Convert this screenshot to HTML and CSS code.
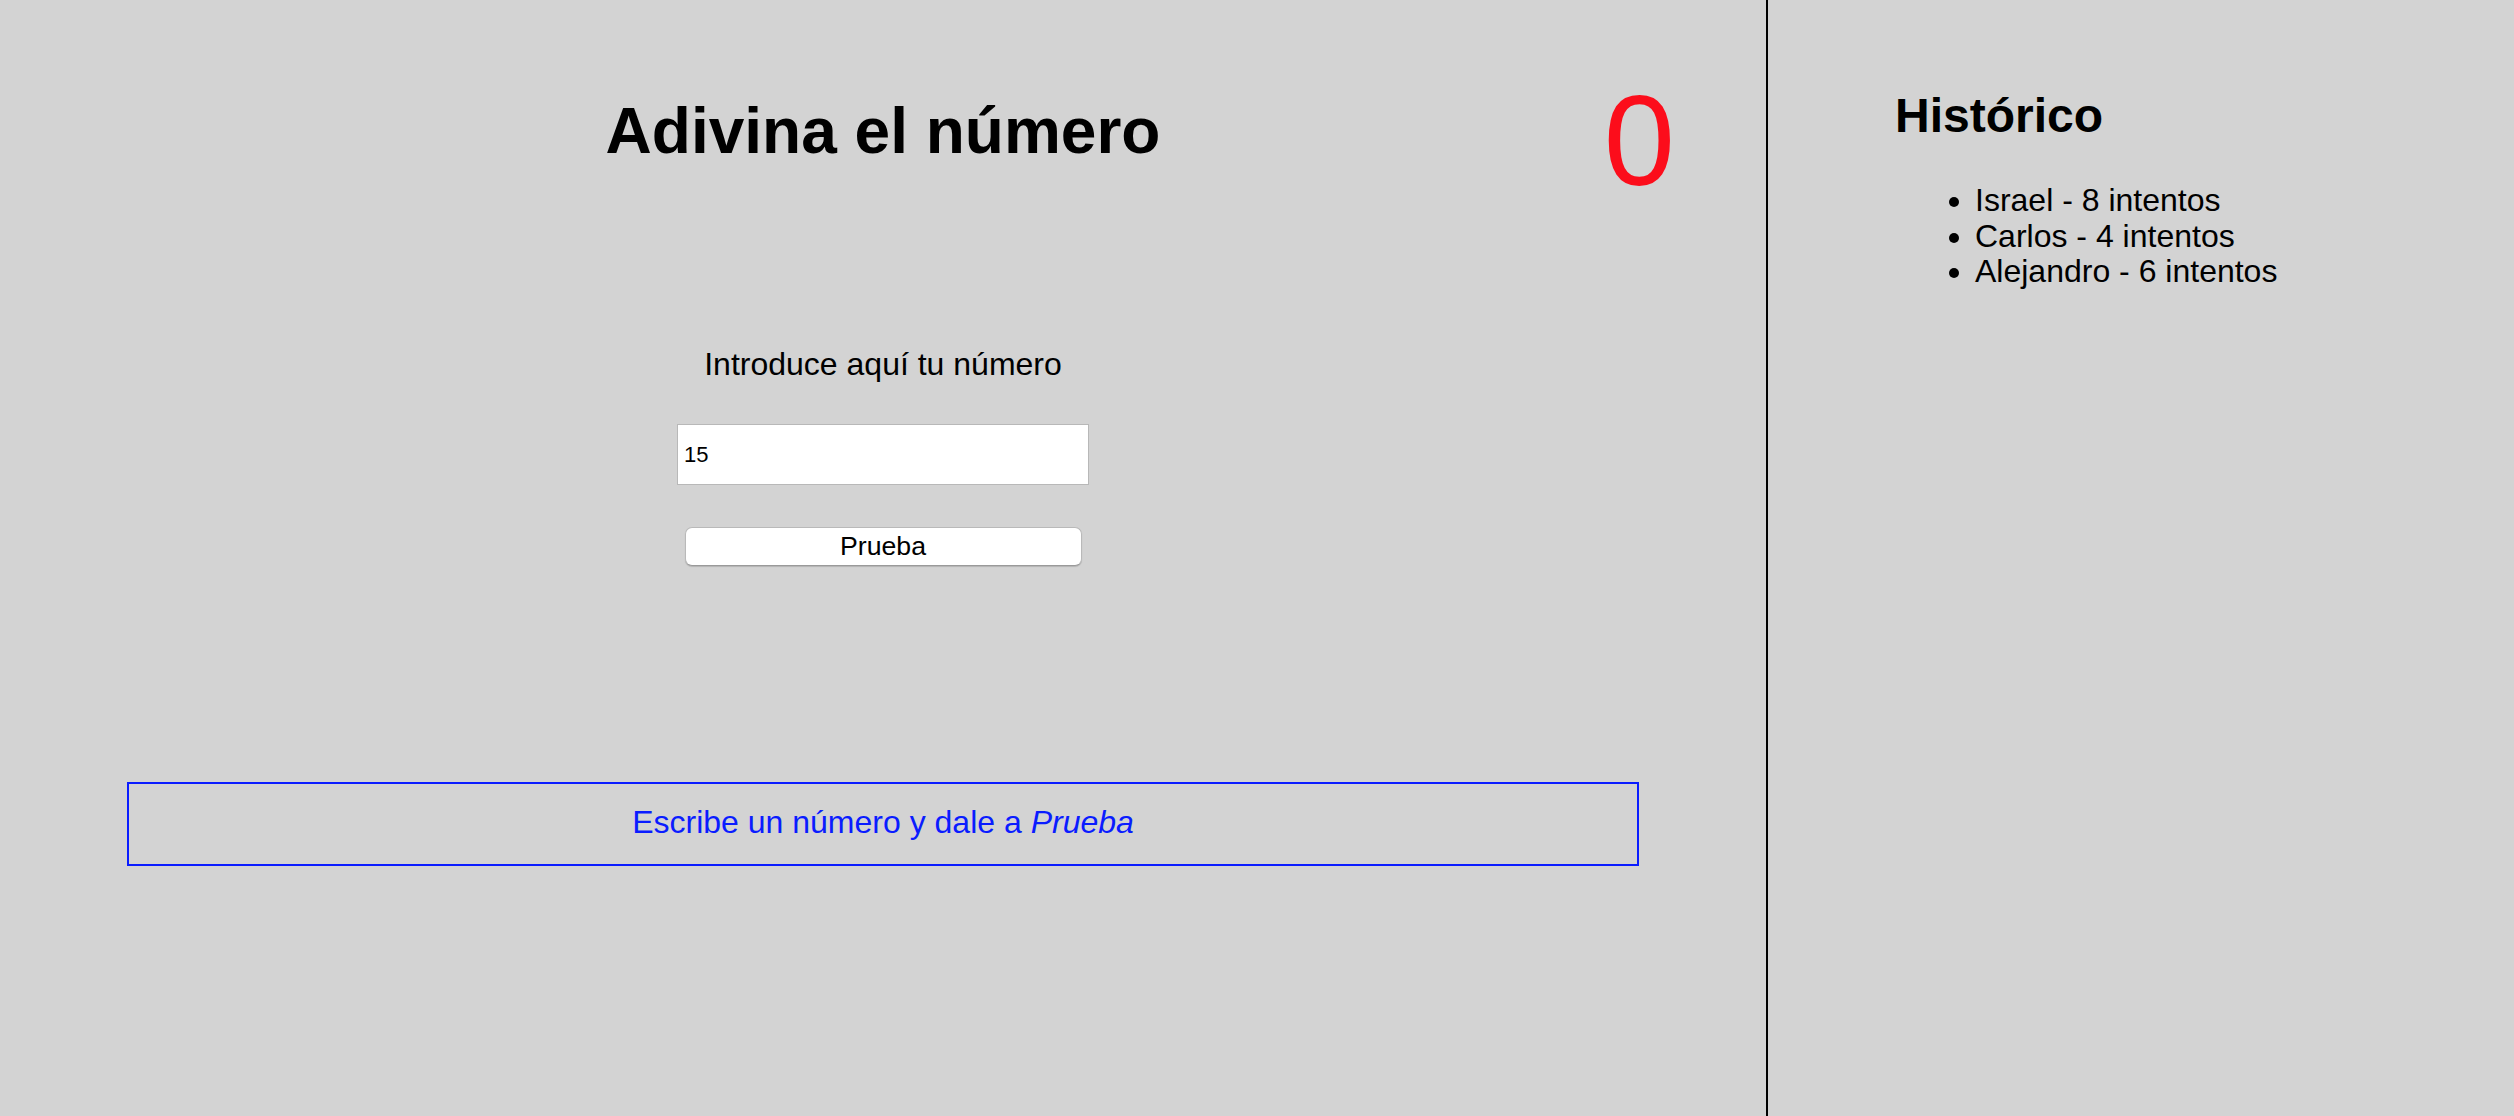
FILE: index.html
```html
<!DOCTYPE html>
<html lang="es">
<head>
<meta charset="utf-8">
<title>Adivina el número</title>
<link rel="stylesheet" href="styles.css">
</head>
<body>
<div class="layout">
  <main class="game">
    <h1 class="title">Adivina el número</h1>
    <div class="counter">0</div>
    <p class="prompt">Introduce aquí tu número</p>
    <input class="guess" type="text" value="15">
    <button class="try" type="button">Prueba</button>
    <div class="message">Escribe un número y dale a <em>Prueba</em></div>
  </main>
  <aside class="history">
    <h2 class="history-title">Histórico</h2>
    <ul class="history-list">
      <li>Israel - 8 intentos</li>
      <li>Carlos - 4 intentos</li>
      <li>Alejandro - 6 intentos</li>
    </ul>
  </aside>
</div>
</body>
</html>
```

FILE: styles.css
```css
html, body {
  margin: 0;
  padding: 0;
  height: 100%;
}

body {
  background: #d3d3d3;
  color: #000;
  font-family: "Liberation Sans", Arial, Helvetica, sans-serif;
  font-size: 32px;
  line-height: 37px;
}

.layout {
  display: flex;
  height: 100vh;
}

.game {
  position: relative;
  width: 1766px;
  flex: none;
  border-right: 2px solid #000;
  display: flex;
  flex-direction: column;
  align-items: center;
}

.title {
  margin: 94px 0 0;
  font-size: 64px;
  line-height: 74px;
  font-weight: bold;
}

.counter {
  position: absolute;
  top: 77px;
  right: 91px;
  color: #fc0d1b;
  font-size: 128px;
  line-height: 128px;
}

.prompt {
  margin: 178px 0 0;
}

.guess {
  margin-top: 41px;
  width: 412px;
  height: 61px;
  box-sizing: border-box;
  padding: 0 6px;
  border: 1px solid #b8b8b8;
  box-shadow: inset 0 0 0 1px #fff;
  background: #fff;
  font-family: "Liberation Sans", Arial, sans-serif;
  font-size: 22px;
  color: #000;
  outline: none;
}

.try {
  margin-top: 42px;
  width: 397px;
  height: 39px;
  box-sizing: border-box;
  padding: 0;
  background: #fff;
  border: 1px solid #b9b9b9;
  border-bottom-color: #9a9a9a;
  border-radius: 7px;
  box-shadow: 0 1px 1px rgba(0, 0, 0, 0.15);
  font-family: "Liberation Sans", Arial, sans-serif;
  font-size: 26.67px;
  line-height: 37px;
  color: #000;
}

.message {
  align-self: stretch;
  margin: 216px 127px 0;
  padding: 20px 0 23px;
  border: 2px solid #0a1cff;
  color: #0a1cff;
  text-align: center;
}

.message em {
  font-style: italic;
}

.history {
  flex: 1;
  padding-left: 127px;
}

.history-title {
  margin: 88px 0 0;
  font-size: 48px;
  line-height: 55px;
  font-weight: bold;
}

.history-list {
  margin: 40px 0 0;
  padding-left: 80px;
  line-height: 35.5px;
}
```
